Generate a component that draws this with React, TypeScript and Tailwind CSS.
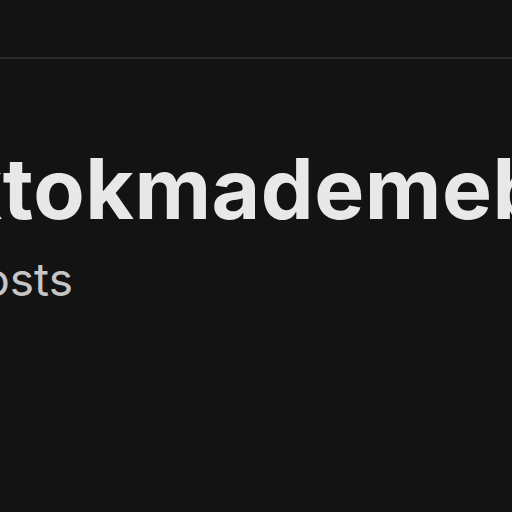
import React from 'react';

const App: React.FC = () => {
  return (
    <div className="w-[512px] h-[512px] overflow-hidden bg-[#131313] font-['Inter',sans-serif]">
      {/* Top bar */}
      <div className="h-[59px] border-b-2 border-[#2b2b2b]" />

      {/* Hashtag header */}
      <div className="pt-[88px]">
        <h1 className="ml-[-156px] whitespace-nowrap text-[84px] leading-[84px] font-bold tracking-[0.5px] text-[#e8e8e8]">
          #tiktokmademebuyit
        </h1>
        <p className="ml-[-46px] mt-[25px] whitespace-nowrap text-[46px] leading-[46px] text-[#c6c6c6]">
          posts
        </p>
      </div>
    </div>
  );
};

export default App;
